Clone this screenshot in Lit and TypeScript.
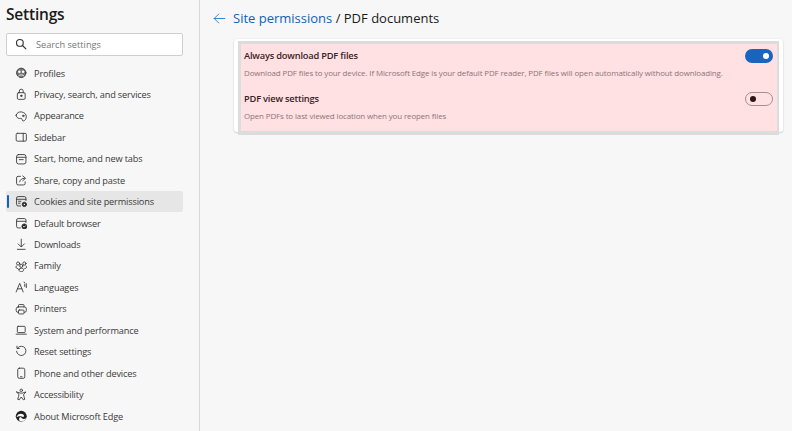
import { LitElement, html, css, svg } from "lit";
import { customElement } from "lit/decorators.js";

const S = (c: unknown) => html`<svg class="ic" viewBox="0 0 16 16" fill="none" stroke="#333" stroke-width="1.1" stroke-linecap="round" stroke-linejoin="round">${c}</svg>`;
const items: [string, unknown][] = [
  ["Profiles", S(svg`<circle cx="8" cy="7.5" r="6" fill="#777"/><circle cx="5.6" cy="6" r="1.6" fill="#fff" stroke="none"/><circle cx="10.4" cy="6" r="1.6" fill="#fff" stroke="none"/><path d="M4.5 11.5c1-2 6-2 7 0" stroke="#fff"/>`)],
  ["Privacy, search, and services", S(svg`<rect x="3" y="6" width="10" height="8.5" rx="1.5"/><path d="M5.5 6V4a2.5 2.5 0 0 1 5 0v2"/><circle cx="8" cy="10" r=".9" fill="#333"/>`)],
  ["Appearance", S(svg`<path d="M1.500 6.500C2.500 3.500 5 2 8.500 2.500c3.500.5 6 3 6 6 0 3-2 5.500-4 5.500-1.500 0-1-2-2-3-1-1-2.500.5-4.500-.5C2.500 9.700 1.200 8 1.500 6.500z"/><circle cx="10.500" cy="7.500" r="1"/>`)],
  ["Sidebar", S(svg`<rect x="1.500" y="3" width="13" height="10" rx="1.500"/><path d="M10.500 3v10"/>`)],
  ["Start, home, and new tabs", S(svg`<rect x="2" y="2" width="12" height="12" rx="2.500"/><path d="M2 5.500h12M5.500 8.500h5"/>`)],
  ["Share, copy and paste", S(svg`<path d="M7 3H4a2 2 0 0 0-2 2v7a2 2 0 0 0 2 2h7a2 2 0 0 0 2-2v-2"/><path d="M6 10c.5-3 3-4.500 6-4.500M10 2.500l3.500 3-3.500 3"/>`)],
  ["Cookies and site permissions", S(svg`<path d="M7 14H4a2 2 0 0 1-2-2V4a2 2 0 0 1 2-2h8a2 2 0 0 1 2 2v3"/><path d="M2 5.500h12M4.500 8h3M4.500 10.500h2"/><circle cx="12" cy="12" r="2.800" fill="#333"/><circle cx="12" cy="12" r=".9" fill="#fff" stroke="none"/>`)],
  ["Default browser", S(svg`<path d="M7 14H4a2 2 0 0 1-2-2V4a2 2 0 0 1 2-2h8a2 2 0 0 1 2 2v3"/><path d="M2 5.500h12"/><circle cx="12" cy="12" r="3.200" fill="#222"/><path d="M10.700 12l1 1 1.700-1.800" stroke="#fff"/>`)],
  ["Downloads", S(svg`<path d="M8 1.500v9.500M4 7.500L8 11.500l4-4M3 14.500h10"/>`)],
  ["Family", S(svg`<circle cx="4" cy="4.500" r="2"/><circle cx="12" cy="4.500" r="2"/><circle cx="8" cy="7.500" r="2"/><path d="M2 7.500C.5 8 .8 11 3.500 11M14 7.500c1.500.5 1.200 3.500-1.500 3.500M5 12c0-2 6-2 6 0 0 2.500-1.500 3-3 3s-3-.5-3-3z"/>`)],
  ["Languages", S(svg`<path d="M1.500 14L6 3l4.500 11M3.200 10h5.600"/><path d="M11.500 1.500l1 .5M12.500 4v3M14.500 3.500v5"/>`)],
  ["Printers", S(svg`<path d="M4.500 5V3a1 1 0 0 1 1-1h5a1 1 0 0 1 1 1v2"/><rect x="1.500" y="5" width="13" height="7" rx="2.500"/><rect x="4.500" y="9" width="7" height="5" rx="1" fill="#f7f7f7"/>`)],
  ["System and performance", S(svg`<rect x="3" y="3" width="10" height="8" rx="1"/><path d="M1.500 13h13"/>`)],
  ["Reset settings", S(svg`<path d="M3.500 3.500A6 6 0 1 1 2 8"/><path d="M2.500 1.500v3h3"/>`)],
  ["Phone and other devices", S(svg`<rect x="3.500" y="1.500" width="9" height="13" rx="2"/><path d="M7 12.500h2"/>`)],
  ["Accessibility", S(svg`<circle cx="8" cy="3" r="1.600"/><path d="M2 5l4.500 1.500h3L14 5l-3 3.500.5 2.500 1 3.500-2 .5L8 11.500 5.500 15l-2-.5 1-3.500.5-2.500z"/>`)],
  ["About Microsoft Edge", html`<svg class="ic" viewBox="0 0 16 16"><circle cx="8" cy="8" r="7" fill="#1f1f1f"/><path d="M2 9c1-4 6-5.500 9-3 1 1 .8 2.500-.5 2.800C9 9 8.500 8 6 8c-2 0-3.500 1-4 1z" fill="#f7f7f7"/><path d="M6 14c-1.500-2-1-4.500 1.500-5 1 2 3.500 3.500 7 1.500-1.500 3.500-5.500 5-8.500 3.500z" fill="#f7f7f7"/></svg>`],
];

@customElement("app-root")
export class AppRoot extends LitElement {
  static styles = css`
    :host { display: block; width: 792px; height: 431px; overflow: hidden; background: #f7f7f7; font-family: "Open Sans", sans-serif; color: #1a1a1a; }
    .page { display: flex; height: 431px; }
    .side { flex: none; width: 177px; border-right: 1px solid #d9d9d9; padding: 0 16px 0 6px; }
    h1 { margin: 0; font-size: 15.500px; font-weight: 600; line-height: 22px; padding-top: 3px; height: 32.500px; box-sizing: border-box; letter-spacing: -.2px; }
    .search { height: 23px; box-sizing: border-box; border: 1px solid #cfcfcf; border-radius: 2px; background: #fff; display: flex; align-items: center; gap: 9px; padding-left: 8px; font-size: 9.200px; color: #777; margin-bottom: 6.800px; }
    .search svg { width: 12px; height: 12px; flex: none; }
    .row { position: relative; display: flex; align-items: center; gap: 7px; height: 21.450px; padding-left: 8.500px; font-size: 9.200px; letter-spacing: -.15px; color: #3a3a3a; border-radius: 2px; white-space: nowrap; }
    .row.sel { background: #e6e6e6; }
    .row.sel::before { content: ""; position: absolute; left: 1px; top: 4.500px; bottom: 4.500px; width: 2px; background: #0f62b8; border-radius: 1px; }
    .ic { width: 12.500px; height: 12.500px; flex: none; }
    .main { flex: 1; min-width: 0; padding: 0 9px 0 34px; }
    .head { display: flex; align-items: center; height: 36px; font-size: 13px; font-weight: 500; gap: 7px; }
    .head svg { width: 13px; height: 13px; margin-left: -21px; flex: none; }
    .head a { color: #0f62b8; }
    .crumbs { white-space: pre; }
    .card { margin-top: 3px; height: 93px; box-sizing: border-box; background: #fff; border-radius: 3px; box-shadow: 0 1px 2px rgba(0,0,0,.14), 0 0 2px rgba(0,0,0,.08); padding: 2px 4px 0 4px; }
    .veil { height: 94px; box-sizing: border-box; background: #dcdcdc; padding: 3px 2px 4px 3px; }
    .pink { height: 87px; box-sizing: border-box; background: #ffe0e3; padding: 4px 4px 0 3px; }
    .set { display: flex; justify-content: space-between; height: 43px; }
    .t { font-size: 9.300px; font-weight: 600; line-height: 15px; color: #3a2226; letter-spacing: -.2px; }
    .d { font-size: 7.900px; line-height: 13px; margin-top: 4px; color: #8d7479; letter-spacing: -.1px; }
    .tg { width: 28px; height: 14px; box-sizing: border-box; border-radius: 7px; flex: none; margin-top: 1px; display: flex; align-items: center; }
    .on { background: #1b64be; justify-content: flex-end; padding-right: 4px; }
    .on i { width: 6.500px; height: 6.500px; border-radius: 50%; background: #fff; }
    .off { border: 1px solid #a68e93; padding-left: 4px; }
    .off i { width: 6px; height: 6px; border-radius: 50%; background: #2d1418; }
  `;
  render() {
    return html`<div class="page">
      <nav class="side">
        <h1>Settings</h1>
        <div class="search">
          <svg viewBox="0 0 16 16" fill="none" stroke="#333" stroke-width="1.500" stroke-linecap="round"><circle cx="6.500" cy="6.500" r="4.500"/><path d="M10 10l4.500 4.500"/></svg>
          <span>Search settings</span>
        </div>
        ${items.map(([n, i]) => html`<div class="row ${n.startsWith("Cookies") ? "sel" : ""}">${i}<span>${n}</span></div>`)}
      </nav>
      <main class="main">
        <div class="head">
          <svg viewBox="0 0 16 16" fill="none" stroke="#1b78d0" stroke-width="1.100" stroke-linecap="round" stroke-linejoin="round"><path d="M1.500 8h13M7 2.500L1.500 8 7 13.500"/></svg>
          <span class="crumbs"><a>Site permissions</a> / PDF documents</span>
        </div>
        <section class="card"><div class="veil"><div class="pink">
          <div class="set"><div><div class="t">Always download PDF files</div><div class="d">Download PDF files to your device. If Microsoft Edge is your default PDF reader, PDF files will open automatically without downloading.</div></div><div class="tg on"><i></i></div></div>
          <div class="set"><div><div class="t">PDF view settings</div><div class="d">Open PDFs to last viewed location when you reopen files</div></div><div class="tg off"><i></i></div></div>
        </div></div></section>
      </main>
    </div>`;
  }
}
